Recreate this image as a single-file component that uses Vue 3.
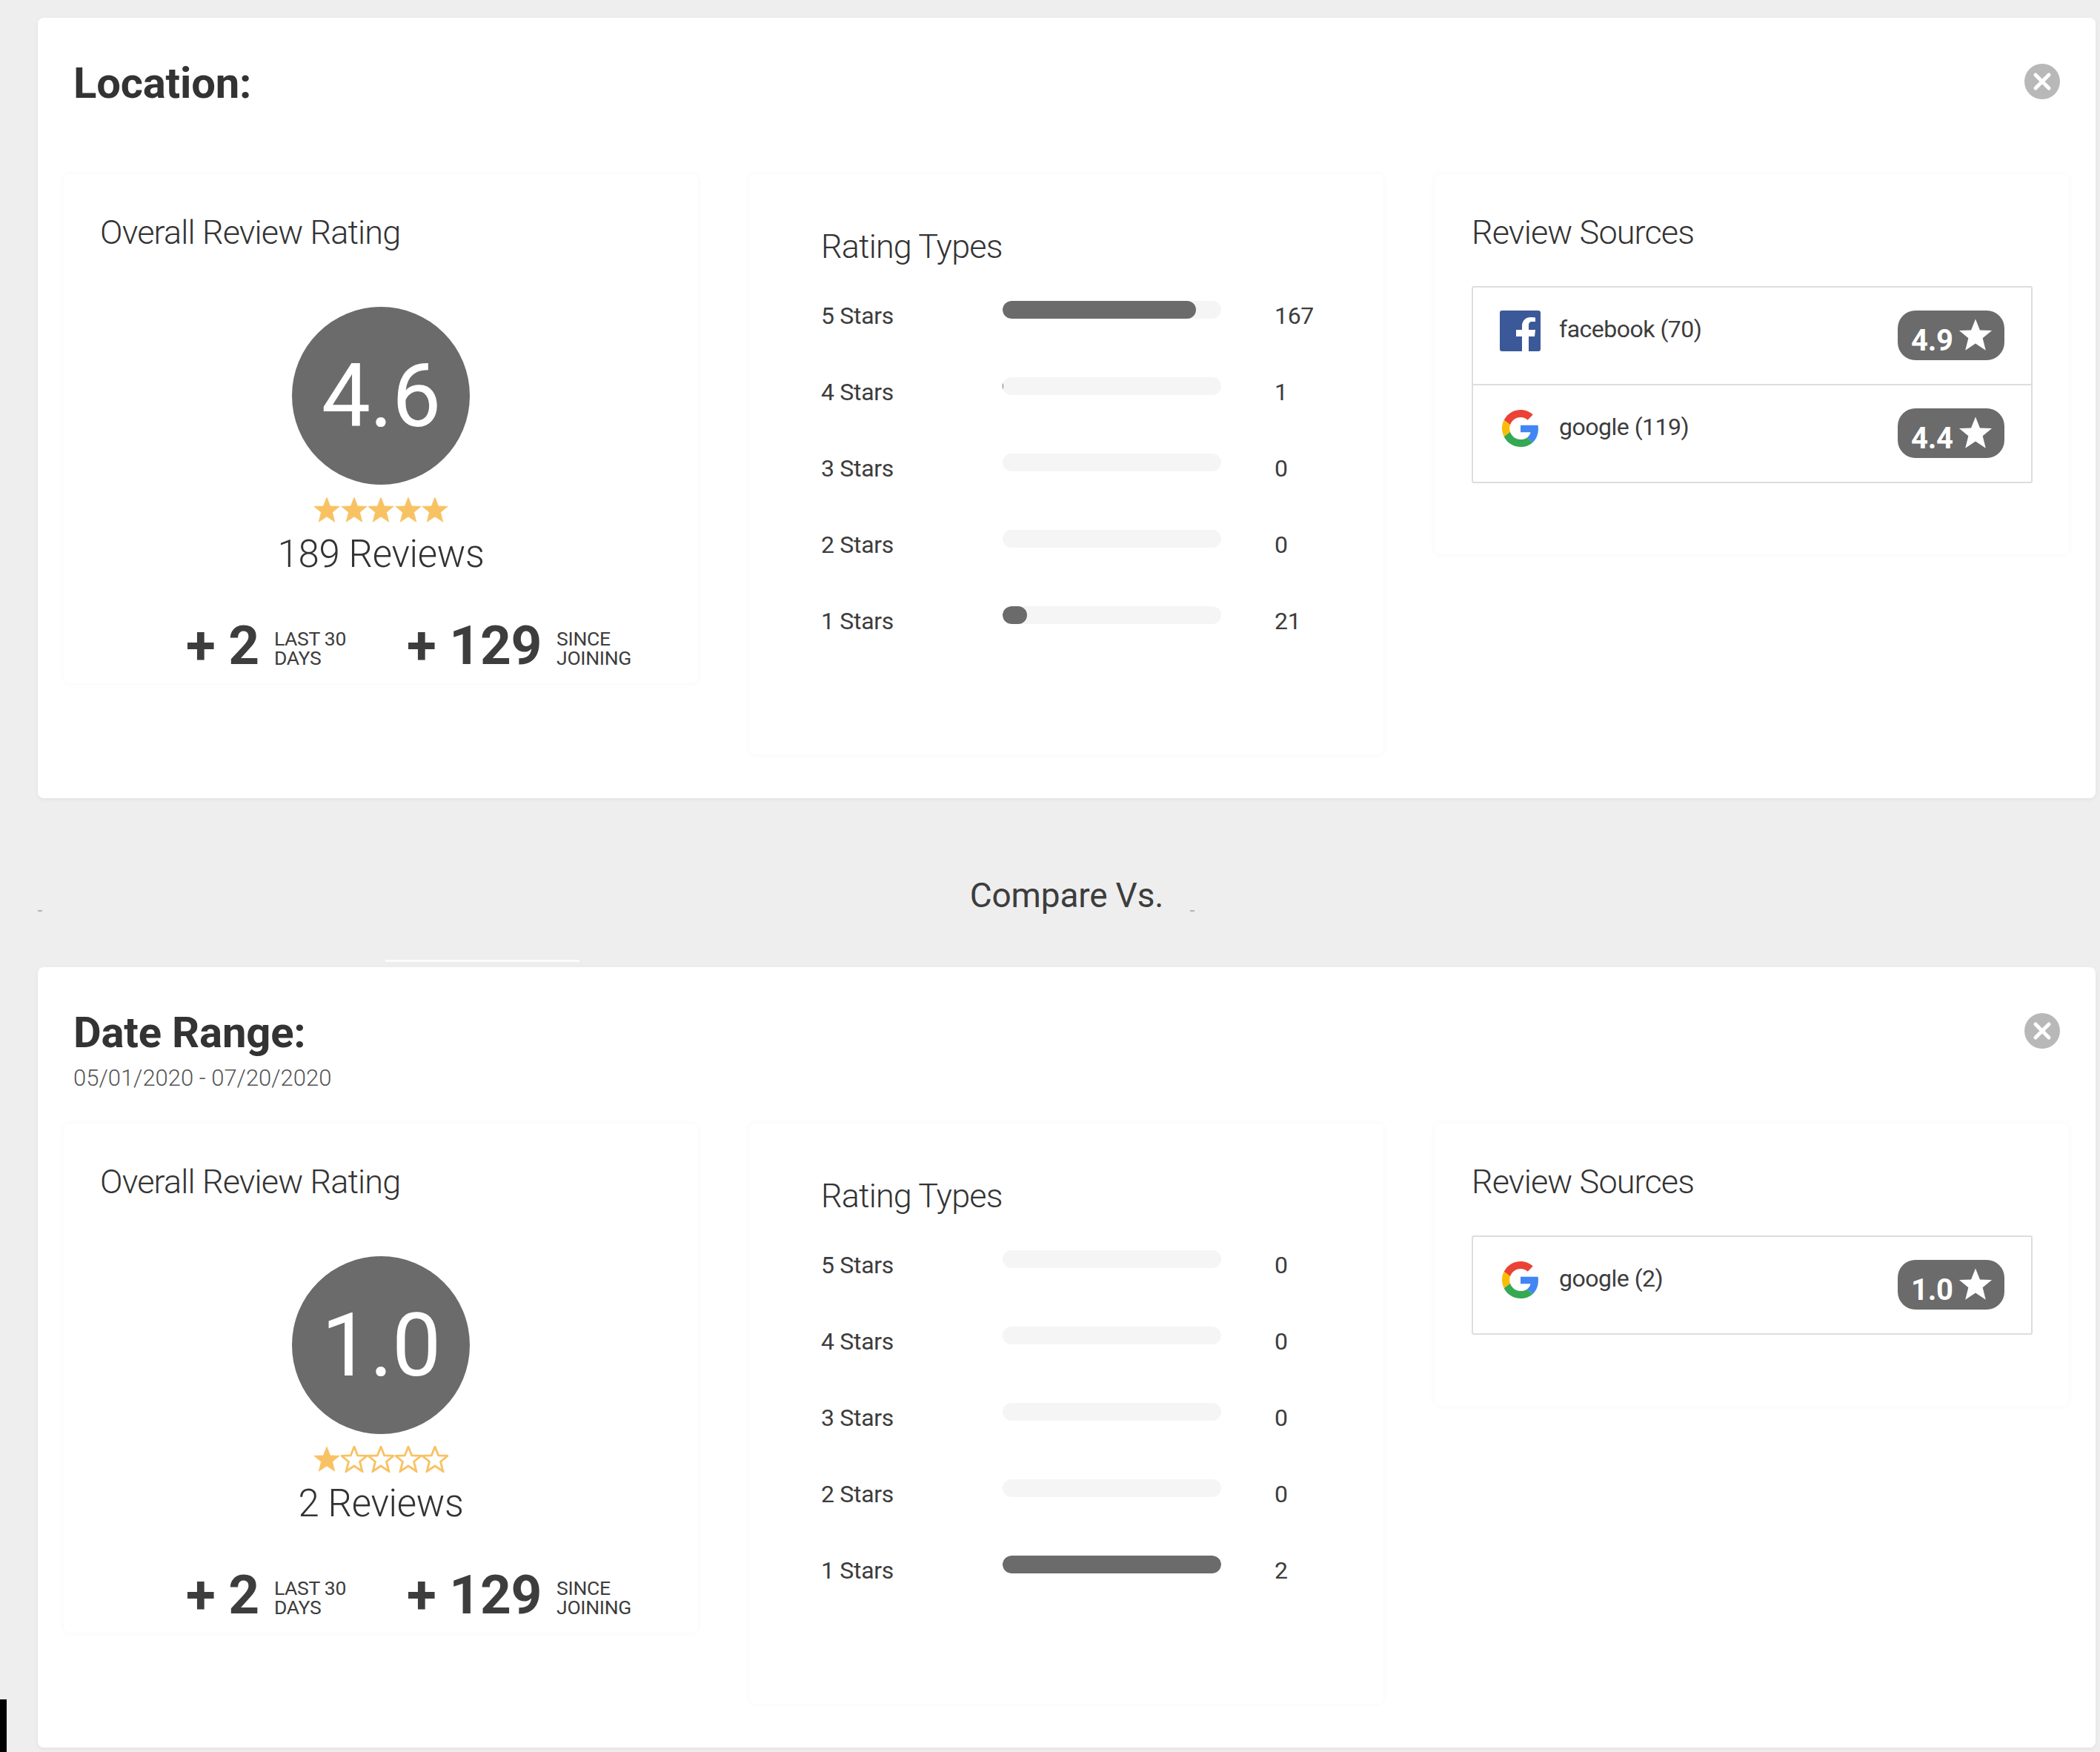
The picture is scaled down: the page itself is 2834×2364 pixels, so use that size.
<script setup>
const panels = [
  {
    title: 'Location:',
    sub: '',
    score: '4.6',
    filled: 5,
    reviews: '189 Reviews',
    bars: [
      { label: '5 Stars', value: 167, pct: 88.4 },
      { label: '4 Stars', value: 1, pct: 0.5 },
      { label: '3 Stars', value: 0, pct: 0 },
      { label: '2 Stars', value: 0, pct: 0 },
      { label: '1 Stars', value: 21, pct: 11.1 },
    ],
    sources: [
      { kind: 'facebook', name: 'facebook (70)', rating: '4.9' },
      { kind: 'google', name: 'google (119)', rating: '4.4' },
    ],
  },
  {
    title: 'Date Range:',
    sub: '05/01/2020 - 07/20/2020',
    score: '1.0',
    filled: 1,
    reviews: '2 Reviews',
    bars: [
      { label: '5 Stars', value: 0, pct: 0 },
      { label: '4 Stars', value: 0, pct: 0 },
      { label: '3 Stars', value: 0, pct: 0 },
      { label: '2 Stars', value: 0, pct: 0 },
      { label: '1 Stars', value: 2, pct: 100 },
    ],
    sources: [{ kind: 'google', name: 'google (2)', rating: '1.0' }],
  },
]
const starPts = '50,3 63,36 98,37 71,59 80,95 50,75 20,95 29,59 2,37 37,36'
</script>

<template>
  <div class="page">
    <template v-for="(p, pi) in panels" :key="p.title">
      <section class="panel">
        <header class="head">
          <div>
            <h1 class="title">{{ p.title }}</h1>
            <div v-if="p.sub" class="sub">{{ p.sub }}</div>
          </div>
          <svg class="close" viewBox="0 0 48 48">
            <circle cx="24" cy="24" r="24" fill="#b8b8b8" />
            <path d="M15 15 33 33M33 15 15 33" stroke="#fff" stroke-width="5" stroke-linecap="round" />
          </svg>
        </header>

        <div class="cards">
          <div class="card overall">
            <h2 class="card-title">Overall Review Rating</h2>
            <div class="circle">{{ p.score }}</div>
            <div class="stars">
              <svg v-for="n in 5" :key="n" class="star" viewBox="0 0 100 100">
                <polygon
                  :points="starPts"
                  :fill="n <= p.filled ? '#f8c263' : 'none'"
                  stroke="#f8c263"
                  :stroke-width="n <= p.filled ? 2 : 8"
                />
              </svg>
            </div>
            <div class="reviews">{{ p.reviews }}</div>
            <div class="stats">
              <div class="stat">
                <span class="plus">+ 2</span>
                <span class="stat-label">LAST 30<br />DAYS</span>
              </div>
              <div class="stat">
                <span class="plus">+ 129</span>
                <span class="stat-label">SINCE<br />JOINING</span>
              </div>
            </div>
          </div>

          <div class="card types">
            <h2 class="card-title">Rating Types</h2>
            <div class="rows">
              <div v-for="b in p.bars" :key="b.label" class="row">
                <span class="row-label">{{ b.label }}</span>
                <span class="track">
                  <span class="fill" :style="{ width: b.pct + '%' }"></span>
                </span>
                <span class="row-val">{{ b.value }}</span>
              </div>
            </div>
          </div>

          <div class="card sources">
            <h2 class="card-title">Review Sources</h2>
            <div class="list">
              <div v-for="s in p.sources" :key="s.name" class="src">
                <span class="logo">
                  <svg v-if="s.kind === 'facebook'" class="fb" viewBox="0 0 55 55">
                    <rect width="55" height="55" rx="3" fill="#3b5998" />
                    <path
                      fill="#fff"
                      d="M39 55V35h8l1-9h-9v-6c0-3 1-5 5-5h4V9.500c-2-.3-4-.5-6-.5-7 0-12 4.500-12 12v5h-8v9h8v20z"
                    />
                  </svg>
                  <svg v-else class="g" viewBox="0 0 48 48">
                    <path fill="#EA4335" d="M24 9.500c3.540 0 6.710 1.220 9.210 3.600l6.850-6.850C35.900 2.380 30.470 0 24 0 14.620 0 6.510 5.380 2.560 13.220l7.980 6.190C12.430 13.720 17.740 9.500 24 9.500z" />
                    <path fill="#4285F4" d="M46.980 24.550c0-1.570-.15-3.090-.38-4.550H24v9.020h12.940c-.58 2.960-2.260 5.480-4.780 7.180l7.730 6c4.510-4.180 7.090-10.360 7.090-17.650z" />
                    <path fill="#FBBC05" d="M10.530 28.590c-.48-1.450-.76-2.990-.76-4.590s.27-3.140.76-4.590l-7.980-6.190C.92 16.460 0 20.120 0 24c0 3.880.92 7.540 2.560 10.780l7.970-6.190z" />
                    <path fill="#34A853" d="M24 48c6.480 0 11.930-2.130 15.890-5.810l-7.730-6c-2.150 1.450-4.920 2.300-8.160 2.300-6.260 0-11.570-4.220-13.470-9.910l-7.980 6.190C6.510 42.620 14.620 48 24 48z" />
                  </svg>
                </span>
                <span class="src-name">{{ s.name }}</span>
                <span class="badge">
                  <span class="badge-num">{{ s.rating }}</span>
                  <svg class="badge-star" viewBox="0 0 100 100"><polygon :points="starPts" fill="#fff" /></svg>
                </span>
              </div>
            </div>
          </div>
        </div>
      </section>

      <div v-if="pi === 0" class="compare">
        <span class="compare-text">Compare Vs.</span>
        <i class="speck speck-a"></i>
        <i class="speck speck-b"></i>
        <i class="sliver"></i>
      </div>
    </template>
    <i class="edge-bar"></i>
  </div>
</template>

<style>
html, body { margin: 0; background: #eeeeee; }
</style>

<style scoped>
.page {
  position: relative;
  width: 2834px;
  height: 2364px;
  box-sizing: border-box;
  padding: 24px 6px 0 51px;
  font-family: Roboto, "Liberation Sans", sans-serif;
  color: #333;
  overflow: hidden;
}
.panel {
  height: 1053px;
  box-sizing: border-box;
  background: #fff;
  border-radius: 8px;
  box-shadow: 0 2px 6px rgba(0, 0, 0, 0.05);
  padding: 0 36px 0 35px;
}
.head {
  height: 211px;
  box-sizing: border-box;
  padding: 54px 12px 0 13px;
  display: flex;
  justify-content: space-between;
  align-items: flex-start;
}
.title {
  margin: 0;
  font-size: 58px;
  line-height: 68px;
  font-weight: 700;
  color: #333;
  letter-spacing: -0.2px;
}
.sub {
  margin-top: 8px;
  font-size: 31px;
  line-height: 40px;
  font-weight: 300;
  color: #555;
}
.close {
  width: 48px;
  height: 48px;
  margin-top: 8px;
  flex: none;
}
.cards {
  display: grid;
  grid-template-columns: repeat(3, 856px);
  column-gap: 69px;
  align-items: start;
}
.card {
  box-sizing: border-box;
  border-radius: 8px;
  background: #fff;
  box-shadow: 0 0 8px rgba(0, 0, 0, 0.04);
}
.card-title {
  margin: 0;
  font-size: 45px;
  line-height: 53px;
  font-weight: 300;
  color: #333;
  letter-spacing: -0.85px;
}
.overall {
  height: 687px;
  padding: 52px 49px 0;
  display: flex;
  flex-direction: column;
  align-items: center;
}
.overall .card-title { align-self: flex-start; }
.circle {
  width: 240px;
  height: 240px;
  margin-top: 74px;
  flex: none;
  border-radius: 50%;
  background: #6b6b6b;
  color: #fff;
  font-size: 118px;
  line-height: 242px;
  letter-spacing: -1px;
  text-align: center;
}
.stars {
  display: flex;
  justify-content: center;
  margin-top: 16px;
  gap: 0.500px;
}
.star {
  width: 36px;
  height: 36px;
  display: block;
}
.reviews {
  margin-top: 12px;
  font-size: 51px;
  line-height: 60px;
  font-weight: 300;
  color: #333;
  letter-spacing: -0.3px;
}
.stats {
  display: flex;
  align-self: flex-start;
  margin: 51px 0 0 116px;
  gap: 82px;
}
.stat {
  display: flex;
  align-items: center;
  gap: 20px;
}
.plus {
  font-size: 73px;
  line-height: 84px;
  font-weight: 700;
  color: #3d3d3d;
  white-space: nowrap;
  letter-spacing: -0.3px;
}
.stat-label {
  font-size: 26.500px;
  line-height: 26px;
  color: #3d3d3d;
  margin-top: 8px;
  letter-spacing: -0.3px;
}
.types {
  height: 783px;
  padding: 71px 98px 0 97px;
}
.rows {
  margin-top: 47px;
}
.row {
  height: 103px;
  display: grid;
  grid-template-columns: 245px 295px auto;
  column-gap: 0;
  align-items: start;
  font-size: 32px;
  line-height: 40px;
  color: #3d3d3d;
}
.row-label { letter-spacing: -0.3px; margin-top: 0; }
.row-val { margin-left: 72px; font-weight: 400; margin-top: 0; letter-spacing: -0.3px; }
.track {
  display: block;
  height: 24px;
  border-radius: 12px;
  background: #f5f5f5;
  overflow: hidden;
}
.fill {
  display: block;
  height: 100%;
  border-radius: 12px;
  background: #6b6b6b;
}
.sources {
  padding: 52px 49px 96px 50px;
}
.list {
  margin-top: 46px;
  border: 2px solid #dddddd;
  border-radius: 3px;
}
.src {
  height: 130px;
  box-sizing: content-box;
  display: flex;
  align-items: flex-start;
  position: relative;
}
.src + .src { border-top: 2px solid #dddddd; }
.logo {
  width: 55px;
  margin: 31px 0 0 36px;
  display: flex;
  justify-content: center;
  flex: none;
}
.fb { width: 55px; height: 55px; display: block; }
.g { width: 50px; height: 50px; display: block; margin-top: 2px; }
.src-name {
  margin: 36px 0 0 25px;
  font-size: 32px;
  line-height: 40px;
  color: #3d3d3d;
  letter-spacing: -0.5px;
}
.badge {
  margin: 31px 36px 0 auto;
  width: 144px;
  height: 67px;
  box-sizing: border-box;
  padding: 0 16px 0 18px;
  border-radius: 24px;
  background: #6b6b6b;
  display: flex;
  justify-content: space-between;
  align-items: flex-start;
}
.badge-num {
  margin-top: 17px;
  font-size: 40px;
  line-height: 47px;
  font-weight: 700;
  color: #fff;
  letter-spacing: -0.3px;
}
.badge-star {
  width: 46px;
  height: 46px;
  margin-top: 10px;
  display: block;
}
.compare {
  position: relative;
  height: 228px;
  box-sizing: border-box;
  padding-top: 104px;
  text-align: center;
}
.compare-text {
  font-size: 46px;
  line-height: 54px;
  color: #3d3d3d;
  display: inline-block;
  letter-spacing: -0.2px;
}
.speck {
  position: absolute;
  top: 151px;
  width: 6px;
  height: 2px;
  background: #b5b5b5;
}
.speck-a { left: 0; }
.speck-b { left: 1555px; }
.sliver {
  position: absolute;
  top: 218px;
  left: 469px;
  width: 262px;
  height: 3px;
  background: #fbfbfb;
}
.edge-bar {
  position: absolute;
  left: 0;
  top: 2293px;
  width: 9px;
  height: 71px;
  background: #000;
}
</style>
